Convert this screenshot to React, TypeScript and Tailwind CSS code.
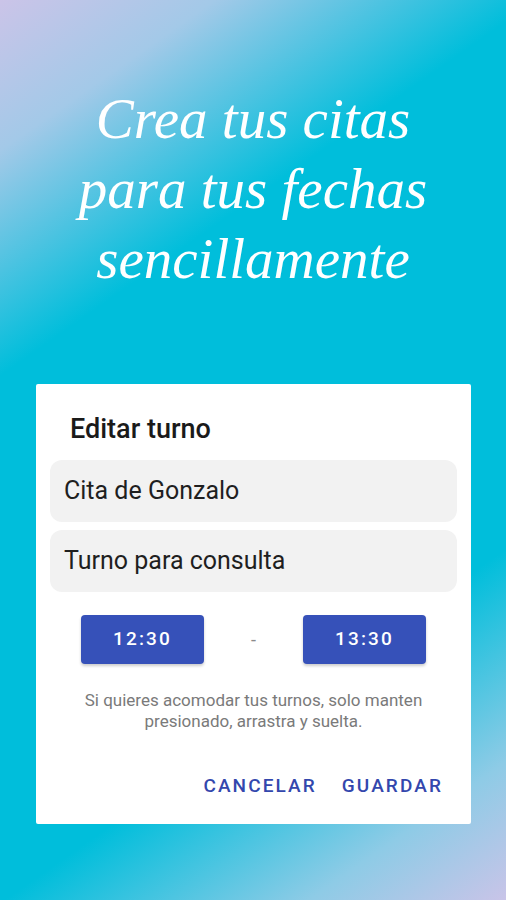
export default function App() {
  return (
    <div className="w-[506px] h-[900px] overflow-hidden bg-[linear-gradient(145deg,#cbc4e8_0%,#a3c9e8_12%,#00bedb_30%,#00bedb_72%,#8ecbe6_89%,#c9c4e8_100%)] font-['Roboto',sans-serif]">
      <h1 className="pt-[84px] text-center text-white italic font-['Liberation_Serif',serif] text-[57px] leading-[70px]">
        Crea tus citas
        <br />
        para tus fechas
        <br />
        sencillamente
      </h1>

      <div className="mt-[90px] ml-[36px] w-[435px] rounded-[2px] bg-white px-[14px] pt-[30px] pb-[26px]">
        <h2 className="pl-[20px] text-[27px] leading-[30px] font-medium text-[#1a1a1a]">Editar turno</h2>

        <div className="mt-[16px] flex flex-col gap-[8px]">
          <div className="h-[62px] rounded-[12px] bg-[#f2f2f2] px-[14px] flex items-center text-[25px] text-[#1f1f1f]">
            Cita de Gonzalo
          </div>
          <div className="h-[62px] rounded-[12px] bg-[#f2f2f2] px-[14px] flex items-center text-[25px] text-[#1f1f1f]">
            Turno para consulta
          </div>
        </div>

        <div className="mt-[23px] flex items-center pl-[31px]">
          <button className="w-[123px] h-[49px] rounded-[4px] bg-[#3651b9] text-white text-[19px] font-medium tracking-[2.2px] shadow-[0_2px_3px_rgba(0,0,0,0.2)]">
            12:30
          </button>
          <span className="w-[99px] text-center text-[18px] text-[#8a8a8a]">-</span>
          <button className="w-[123px] h-[49px] rounded-[4px] bg-[#3651b9] text-white text-[19px] font-medium tracking-[2.2px] shadow-[0_2px_3px_rgba(0,0,0,0.2)]">
            13:30
          </button>
        </div>

        <p className="mt-[26px] text-center text-[17px] leading-[21px] text-[#7a7a7a]">
          Si quieres acomodar tus turnos, solo manten
          <br />
          presionado, arrastra y suelta.
        </p>

        <div className="mt-[42px] flex justify-end gap-[25px] pr-[14px] text-[19px] leading-[24px] font-medium tracking-[2.1px] text-[#3347ad]">
          <button>CANCELAR</button>
          <button>GUARDAR</button>
        </div>
      </div>
    </div>
  );
}
